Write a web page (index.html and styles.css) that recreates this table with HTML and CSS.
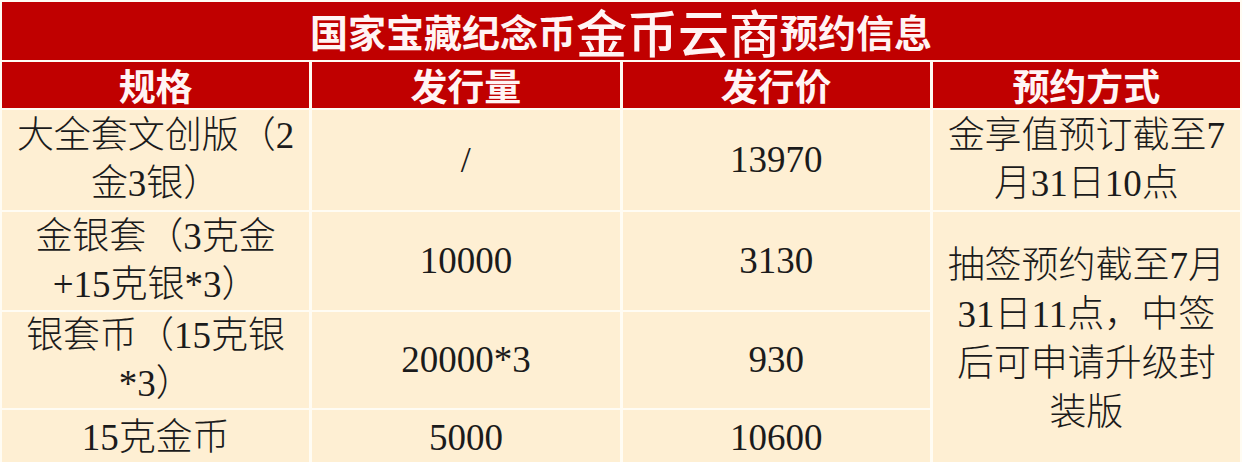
FILE: index.html
```html
<!DOCTYPE html>
<html lang="zh-CN">
<head>
<meta charset="utf-8">
<title>国家宝藏纪念币金币云商预约信息</title>
<link rel="stylesheet" href="styles.css">
</head>
<body>
<div class="sheet">
  <div class="title"><span class="t-small">国家宝藏纪念币</span><span class="t-big">金币云商</span><span class="t-small">预约信息</span></div>
  <div class="head">规格</div>
  <div class="head">发行量</div>
  <div class="head">发行价</div>
  <div class="head">预约方式</div>

  <div class="cell r1">大全套文创版（2<br>金3银）</div>
  <div class="cell r1 slash">/</div>
  <div class="cell r1">13970</div>
  <div class="cell r1">金享值预订截至7<br>月31日10点</div>

  <div class="cell r2">金银套（3克金<br>+15克银*3）</div>
  <div class="cell r2">10000</div>
  <div class="cell r2">3130</div>
  <div class="cell merged">抽签预约截至7月<br>31日11点，中签<br>后可申请升级封<br>装版</div>

  <div class="cell r3">银套币（15克银<br>*3）</div>
  <div class="cell r3">20000*3</div>
  <div class="cell r3">930</div>

  <div class="cell r4">15克金币</div>
  <div class="cell r4">5000</div>
  <div class="cell r4">10600</div>
</div>
</body>
</html>
```

FILE: styles.css
```css
html, body {
  margin: 0;
  padding: 0;
  background: #fffcf3;
}
body {
  width: 1242px;
  height: 462px;
  overflow: hidden;
}
.sheet {
  display: grid;
  grid-template-columns: repeat(4, 1fr);
  grid-template-rows: 58px 46px 100px 98px 96px 54px;
  column-gap: 3px;
  row-gap: 2px;
  padding: 2px 2px 0 2px;
  font-family: "Liberation Serif", "Noto Sans CJK SC", serif;
}
.title {
  grid-column: 1 / span 4;
  background: #c00000;
  color: #fff4f4;
  font-family: "Noto Sans CJK SC", sans-serif;
  font-weight: 700;
  display: flex;
  align-items: flex-end;
  justify-content: center;
  line-height: 58px;
  height: 58px;
  overflow: visible;
}
.t-small {
  font-size: 38px;
  line-height: 58px;
}
.t-big {
  font-size: 51px;
  line-height: 58px;
  font-weight: 500;
}
.head {
  background: #c00000;
  color: #fff4f4;
  font-family: "Noto Sans CJK SC", sans-serif;
  font-weight: 700;
  font-size: 37px;
  line-height: 46px;
  display: flex;
  align-items: center;
  justify-content: center;
}
.cell {
  background: #feefd3;
  color: #1b1b1b;
  font-size: 37px;
  font-weight: 300;
  line-height: 48px;
  display: flex;
  align-items: center;
  justify-content: center;
  text-align: center;
}
.slash {
  font-size: 36px;
  font-weight: 400;
}
.merged {
  grid-column: 4;
  grid-row: 4 / span 3;
  line-height: 49px;
  padding-top: 2px;
  box-sizing: border-box;
}
.r4 {
  padding-top: 2px;
  box-sizing: border-box;
}
```
